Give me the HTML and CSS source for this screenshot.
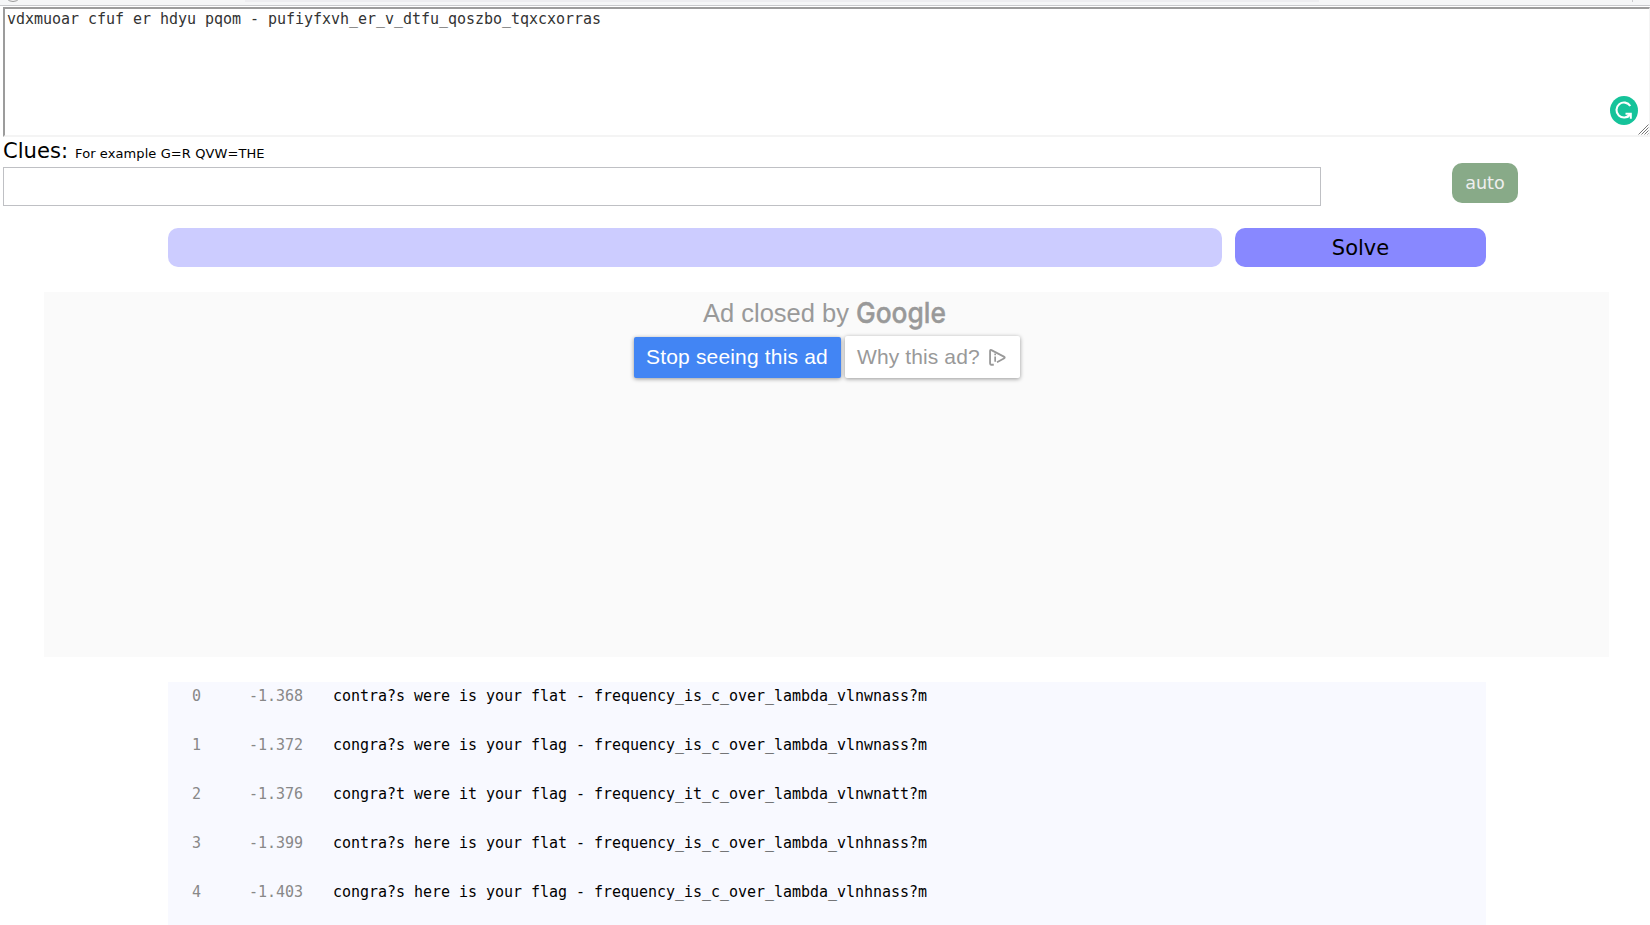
FILE: index.html
```html
<!DOCTYPE html>
<html lang="en">
<head>
<meta charset="utf-8">
<title>Cipher solver</title>
<link rel="stylesheet" href="styles.css">
</head>
<body>
<div class="page">
  <div class="toolbar"><span class="toolbar-ring"></span><span class="toolbar-field"></span><span class="toolbar-mark"></span></div>
  <div class="cipher">
    <div class="cipher-text">vdxmuoar cfuf er hdyu pqom - pufiyfxvh_er_v_dtfu_qoszbo_tqxcxorras</div>
    <svg class="checker" viewBox="0 0 28 29"><ellipse cx="14" cy="14.5" rx="14" ry="14.5" fill="#15c39a"/><path d="M20.300 10A7.500 7.500 0 1 0 20 18.500" fill="none" stroke="#fff" stroke-width="2.1"/><path d="M15.500 17.700h5.300v5" fill="none" stroke="#fff" stroke-width="2"/><path d="M20.500 17.700l-3 3.500" stroke="#fff" stroke-width="2"/></svg>
    <svg class="grip" viewBox="0 0 11 11"><path d="M.5 10.5l10-10M3.5 10.5l7-7M6.500 10.5l4-4M9.500 10.5l1-1" stroke="#777" stroke-width="1"/></svg>
  </div>
  <div class="clues"><span class="clues-label">Clues:</span><span class="clues-hint">For example G=R QVW=THE</span></div>
  <div class="clue-row"><div class="clue-input"></div><div class="auto">auto</div></div>
  <div class="solve-row"><div class="progress"></div><div class="solve">Solve</div></div>
  <div class="ad">
    <div class="ad-title"><span class="ad-by">Ad closed by</span>
      <svg class="google" viewBox="0 0 92 32"><text x="-1" y="24.500" textLength="90" lengthAdjust="spacingAndGlyphs">Google</text></svg>
    </div>
    <div class="ad-buttons">
      <div class="stop"><span>Stop seeing this ad</span></div>
      <div class="why"><span>Why this ad?</span><svg class="choices" viewBox="0 0 16 16"><path d="M4.500 14.800H2.600Q1 15 1 13.500V2Q1 .5 2.300 1.100L14 7.200Q15.600 8 14 8.900L7.500 12.400" fill="none" stroke="#999" stroke-width="1.7"/><path d="M5.800 7v5M5.800 4.300v1.500" stroke="#999" stroke-width="1.600"/></svg></div>
    </div>
  </div>
  <div class="results">
    <div class="row"><span class="num">0</span><span class="score">-1.368</span><span>contra?s were is your flat - frequency_is_c_over_lambda_vlnwnass?m</span></div>
    <div class="row"><span class="num">1</span><span class="score">-1.372</span><span>congra?s were is your flag - frequency_is_c_over_lambda_vlnwnass?m</span></div>
    <div class="row"><span class="num">2</span><span class="score">-1.376</span><span>congra?t were it your flag - frequency_it_c_over_lambda_vlnwnatt?m</span></div>
    <div class="row"><span class="num">3</span><span class="score">-1.399</span><span>contra?s here is your flat - frequency_is_c_over_lambda_vlnhnass?m</span></div>
    <div class="row"><span class="num">4</span><span class="score">-1.403</span><span>congra?s here is your flag - frequency_is_c_over_lambda_vlnhnass?m</span></div>
  </div>
</div>
</body>
</html>
```
FILE: styles.css
```css
* { box-sizing: border-box; }
body { margin: 0; background: #fff; font-family: "DejaVu Sans", sans-serif; color: #000; }
.page { width: 1650px; height: 925px; overflow: hidden; display: flex; flex-direction: column; }
.toolbar { position: relative; flex: none; height: 6px; background: #f5f6f7; border-bottom: 1px solid #c8c9cc; overflow: hidden; }
.toolbar-ring { position: absolute; left: 4px; top: -16px; width: 18px; height: 18px; border: 1px solid #999; border-radius: 50%; }
.toolbar-field { position: absolute; left: 245px; top: 0; width: 1074px; height: 2px; background: #ededf0; }
.toolbar-mark { position: absolute; left: 1632px; top: 0; width: 1px; height: 2px; background: #c8c9cc; }
.cipher { position: relative; flex: none; height: 130px; margin: 1px 0 0 3px; padding: 1px 2px; border: 2px solid; border-width: 2px 1px 2px 2px; border-color: #9c9c9c #f4f4f4 #f4f4f4 #9c9c9c; font: 15px/18px "DejaVu Sans Mono", monospace; color: #333; }
.cipher-text { letter-spacing: -0.03px; white-space: pre; }
.checker { position: absolute; right: 11px; bottom: 10px; width: 28px; height: 29px; }
.grip { position: absolute; right: 0; bottom: 0; width: 11px; height: 11px; }
.clues { flex: none; display: flex; align-items: baseline; gap: 7px; height: 30px; padding-left: 3px; line-height: 28px; }
.clues-label { font-size: 21.1px; }
.clues-hint { font-size: 13px; letter-spacing: .09px; }
.clue-row { flex: none; display: flex; height: 39px; padding-left: 3px; gap: 131px; }
.clue-input { width: 1318px; height: 39px; border: 1px solid #bfc0c4; }
.auto { width: 66px; height: 40px; margin-top: -4px; border-radius: 10px; background: #8a8; color: #eee; font-size: 17.6px; line-height: 41px; text-align: center; }
.solve-row { flex: none; display: flex; gap: 13px; margin: 22px 0 0 168px; height: 39px; }
.progress { width: 1054px; border-radius: 10px; background: #ccf; }
.solve { width: 251px; border-radius: 10px; background: #88f; font-size: 21px; line-height: 41px; text-align: center; }
.ad { flex: none; width: 1565px; height: 365px; margin: 25px 0 0 44px; background: #fafafa; font-family: "Liberation Sans", Arial, sans-serif; color: #999; }
.ad-title { display: flex; height: 44px; padding: 6px 0 0 659px; gap: 8px; line-height: 31px; font-size: 25.5px; }
.ad-by { width: 146px; white-space: nowrap; }
.google { width: 92px; height: 32px; overflow: visible; }
.google text { font: 500 29px Inter, sans-serif; fill: #999; stroke: #999; stroke-width: .4px; }
.ad-buttons { display: flex; align-items: flex-end; gap: 4px; height: 42px; padding-left: 590px; font-size: 21px; }
.stop, .why { display: flex; align-items: center; border-radius: 2px; box-shadow: 0 1px 4px rgba(0,0,0,.4); white-space: nowrap; }
.stop { width: 207px; height: 41px; padding: 0 0 2px 12px; background: #4285f4; color: #fff; letter-spacing: .17px; }
.why { width: 175px; height: 42px; padding-left: 12px; gap: 9px; background: #fff; letter-spacing: .11px; }
.choices { width: 17px; height: 17px; }
.results { flex: none; width: 1318px; height: 243px; margin: 25px 0 0 168px; background: #f8f9ff; font: 15px/18px "DejaVu Sans Mono", monospace; }
.row { display: grid; grid-template-columns: 57px 84px auto; height: 49px; padding: 5px 0 0 24px; letter-spacing: -0.03px; white-space: pre; }
.num, .score { color: #888; }
```
